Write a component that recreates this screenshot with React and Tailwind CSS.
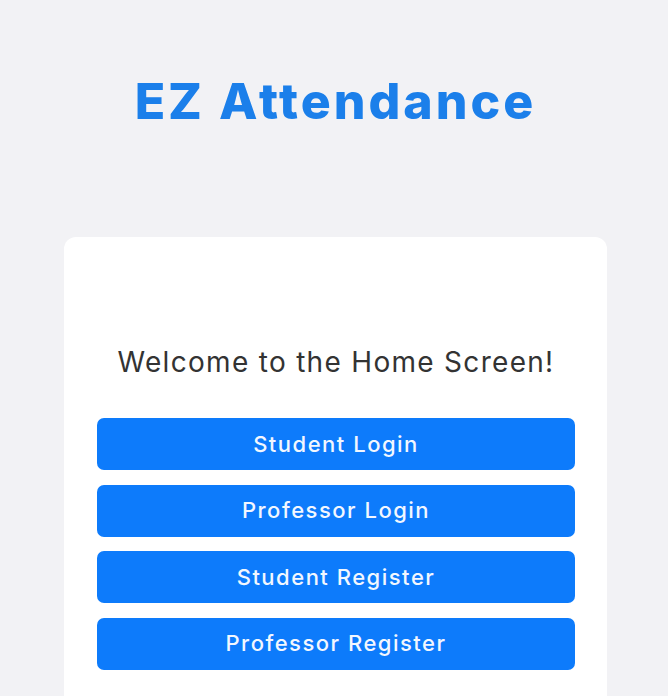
export default function App() {
  const buttons = ["Student Login", "Professor Login", "Student Register", "Professor Register"];

  return (
    <main className="min-h-screen w-full flex flex-col items-center bg-[#f2f2f5] font-['Inter','Liberation_Sans',sans-serif] overflow-hidden h-[696px]">
      {/* Title */}
      <h1 className="mt-[76px] text-[50px] leading-[50px] font-extrabold tracking-[3px] text-[#1b7fea] ml-[3px]">
        EZ Attendance
      </h1>

      {/* Card */}
      <section className="mt-[111px] ml-[3px] w-[543px] bg-white rounded-[12px] pt-[109px] pb-10 pl-[33px] pr-[32px] flex flex-col shrink-0">
        <p className="text-[28px] leading-[32px] text-[#333333] text-center tracking-[1.3px]">
          Welcome to the Home Screen!
        </p>

        <div className="mt-[40px] flex flex-col gap-[14.67px]">
          {buttons.map((label) => (
            <button
              key={label}
              className="h-[52px] w-full rounded-[7px] bg-[#0d7bfb] text-[#f2f7ff] text-[22px] font-medium tracking-[1.5px] flex items-center justify-center"
            >
              {label}
            </button>
          ))}
        </div>
      </section>
    </main>
  );
}
